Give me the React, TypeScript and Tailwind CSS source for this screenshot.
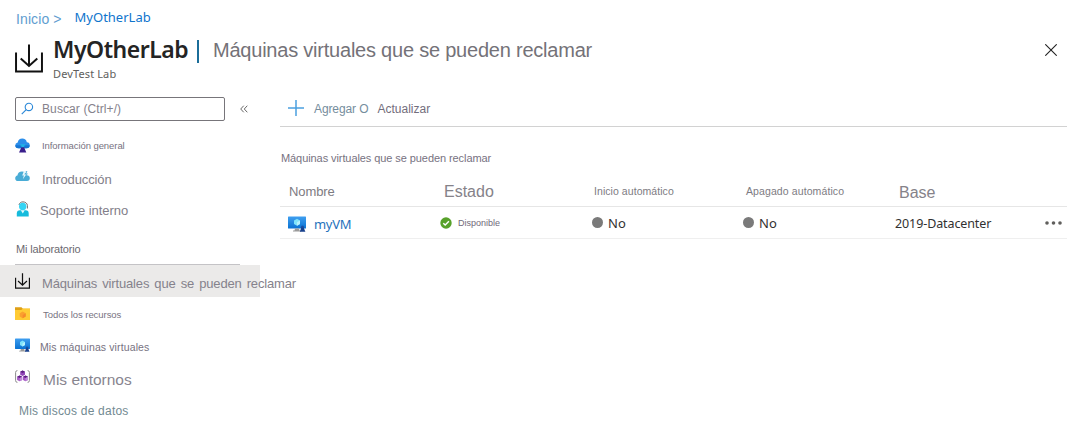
import React from "react";

const ARIAL = "font-['Liberation_Sans',Arial,sans-serif]";
const SEGOE = "font-['Noto_Sans','Segoe_UI',sans-serif]";

function Txt({ className, segoe, children }: { className: string; segoe?: boolean; children: React.ReactNode }) {
  return <span className={`${segoe ? SEGOE : ARIAL} block whitespace-nowrap ${className}`}>{children}</span>;
}

function DownloadIcon({ className, stroke }: { className: string; stroke: number }) {
  return (
    <svg viewBox="0 0 27 29" preserveAspectRatio="none" className={className} fill="none" stroke="#111" strokeWidth={stroke}>
      <path d="M1 8.500V27.500H26V8.500" />
      <path d="M13.500 0.500V21.500M5.500 14.500L13.500 22L21.500 14.500" />
    </svg>
  );
}

function VmIcon({ className }: { className: string }) {
  return (
    <svg viewBox="0 0 18 16" preserveAspectRatio="none" className={className}>
      <defs>
        <linearGradient id="vm" x1="0" y1="0" x2="0" y2="1">
          <stop offset="0" stopColor="#3f9ff0" />
          <stop offset="1" stopColor="#0a72d2" />
        </linearGradient>
      </defs>
      <rect x="0" y="0.500" width="18" height="12" rx="0.500" fill="url(#vm)" />
      <path d="M7 12.500h4l.5 2H13V15.500H5V14.500H6.500z" fill="#9a9a9a" />
      <path d="M9 2.800l3 1.700v3.600l-3 1.700-3-1.700V4.500z" fill="#7fe3fa" />
      <path d="M9 6.300l3-1.800v3.600l-3 1.700z" fill="#b4f1fd" />
      <circle cx="14.500" cy="11.200" r="1.600" fill="#1c4da1" />
      <path d="M11.800 15.800l1.500-4h2.400l1.700 4z" fill="#17408d" />
    </svg>
  );
}

function OverviewIcon() {
  return (
    <svg viewBox="0 0 15 15" className="size-[15px]">
      <path d="M3.300 10.300A3 3 0 0 1 .3 7.300a2.900 2.900 0 0 1 2.400-2.900A4.700 4.700 0 0 1 7.300.5a4.600 4.600 0 0 1 4.500 3.700 3.100 3.100 0 0 1 2.900 3.100 3 3 0 0 1-3 3z" fill="#2c8eea" />
      <path d="M3.300 10.300A3 3 0 0 1 .3 7.300h14.400a3 3 0 0 1-3 3z" fill="#1676d4" />
      <path d="M5.300 6.300h5v1.200H9.200v2.300H6.400V7.500H5.300z" fill="#20b4e6" />
      <path d="M6.400 9.300h2.700l2.200 5.200H4z" fill="#3a1f8c" />
    </svg>
  );
}

function QuickstartIcon() {
  return (
    <svg viewBox="0 0 15 12" className="h-[12px] w-[15px]">
      <path d="M3 11A2.800 2.800 0 0 1 .2 8.200c0-1.400.9-2.400 2.200-2.700A4.800 4.800 0 0 1 7 1.500a5 5 0 0 1 4.800 3.700A3 3 0 0 1 14.800 8a2.900 2.900 0 0 1-3 3z" fill="#49acd6" />
      <path d="M8.800 1.200L7.200 5.600h1.700L7.800 9.200l3.400-4.800H9.400L11 1.200z" fill="#e8f6fb" />
      <path d="M10.800.9l1.600.2-.9 2.400h1.600L11 6.200z" fill="#6cbde0" />
    </svg>
  );
}

function SupportIcon() {
  return (
    <svg viewBox="0 0 14 16" className="h-[16px] w-[14px]">
      <path d="M3 4C3.500 1.700 5 .9 7 .9s4.400 1.200 4.400 3.600V7.500" fill="none" stroke="#6e6e6e" strokeWidth="1" />
      <circle cx="6.700" cy="5.500" r="3.700" fill="#35d4f4" />
      <path d="M.8 15.500V12.500C.8 10.500 2 9.300 4 9.300h5.700c2 0 3 1.200 3 3.200v3z" fill="#16bbdc" />
      <path d="M4.800 9.300h3.900L6.800 12.500z" fill="#e2fafe" />
    </svg>
  );
}

function FolderIcon() {
  return (
    <svg viewBox="0 0 15 13" className="h-[13px] w-[15px]">
      <path d="M0 .3h6.500l1.500 1.500H15V13H0z" fill="#dfa016" />
      <path d="M0 3h6.300L8 1.600H15V13H0z" fill="#ffcb34" />
      <path d="M7.700 4.500l3 1.700v3.300l-3 1.700-3-1.700V6.200z" fill="#fba02e" />
      <path d="M7.700 7.900l3-1.700v3.300l-3 1.700z" fill="#f58a2c" />
    </svg>
  );
}

function EnvIcon() {
  return (
    <svg viewBox="0 0 15 13" className="h-[13px] w-[15px]">
      <path d="M2.400.6Q.6.600.6 2.400v8.200q0 1.800 1.800 1.800M12.600.6q1.800 0 1.800 1.800v8.200q0 1.800-1.800 1.800" fill="none" stroke="#8c8c8c" strokeWidth="1" />
      <path d="M7.600.4L10 1.700v3L7.600 6 5.200 4.700v-3z" fill="#9347b8" />
      <path d="M4.700 5.400l2.500 1.300v3.200l-2.500 1.400-2.600-1.400V6.700z" fill="#a456c4" />
      <path d="M10.500 5.400l2.500 1.300v3.200l-2.500 1.400L8 9.900V6.700z" fill="#a456c4" />
      <path d="M5.200 1.700L7.600.4 10 1.700 7.600 3zM2.100 6.700l2.600-1.300 2.500 1.300-2.500 1.400zM8 6.700l2.500-1.300L13 6.700l-2.500 1.400z" fill="#5b1f80" />
      <path d="M4.700 8.100v3.200l2.500-1.400V6.700zM10.500 8.100v3.200L13 9.900V6.700z" fill="#c08ad8" />
    </svg>
  );
}

function NavRow({ icon, iconClass, children, className = "h-8" }: { icon?: React.ReactNode; iconClass?: string; children: React.ReactNode; className?: string }) {
  return (
    <div className={`flex w-[260px] items-center pl-[15px] ${className}`}>
      {icon && <span className={`flex w-[15px] shrink-0 justify-center ${iconClass ?? ""}`}>{icon}</span>}
      {children}
    </div>
  );
}

const grid = "grid grid-cols-[160px_153px_152px_147px_1fr] border-b";

export default function App() {
  return (
    <div className="flex h-[425px] w-[1083px] flex-col overflow-hidden bg-white">
      <nav className="flex h-9 items-start pl-4">
        <Txt className="mt-[11px] text-[14px] leading-[16px] tracking-[0.1px] text-[#5f9dd0]">Inicio &gt;</Txt>
        <Txt segoe className="ml-[13px] mt-[8px] text-[13px] leading-[18px] text-[#0f74cc]">MyOtherLab</Txt>
      </nav>

      <header className="flex h-[54px] items-start pl-[15px]">
        <DownloadIcon className="mt-[8px] h-[29px] w-[28px]" stroke={1.9} />
        <div className="ml-[10px] w-[142px]">
          <Txt segoe className="h-[30px] text-[23px] font-semibold leading-[26px] tracking-[-0.48px] text-[#242424]">MyOtherLab</Txt>
          <Txt segoe className="text-[11px] leading-[16px] tracking-[0.12px] text-[#605e5c]">DevTest Lab</Txt>
        </div>
        <div className="ml-[2px] mt-[4px] h-[23px] w-[2px] bg-[#1b6d99]" />
        <Txt className="ml-[14px] mt-[3px] text-[20px] leading-[22px] tracking-[-0.22px] text-[#747278]">Máquinas virtuales que se pueden reclamar</Txt>
        <svg viewBox="0 0 12 12" className="ml-auto mr-[26px] mt-[8px] size-[12px]" stroke="#222" strokeWidth="1.100">
          <path d="M.3.3l11.400 11.400M11.700.3L.3 11.700" />
        </svg>
      </header>

      <div className="flex flex-1">
        <aside className="w-[280px] shrink-0">
          <div className="flex h-[39px] items-center pb-[2px] pl-[15px]">
            <div className="flex h-[24px] w-[210px] items-center rounded-[2px] border border-[#77757a] pl-[5px]">
              <svg viewBox="0 0 14 14" className="size-[13px]" fill="none" stroke="#2b88d8" strokeWidth="1.200">
                <circle cx="8.500" cy="5.300" r="4" />
                <path d="M5.600 8.200L.8 13" />
              </svg>
              <Txt className="ml-[8px] mt-px text-[12px] leading-[14px] tracking-[0.1px] text-[#85828c]">Buscar (Ctrl+/)</Txt>
            </div>
            <svg viewBox="0 0 9 8" className="ml-[15px] size-[8px]" fill="none" stroke="#555" strokeWidth="1">
              <path d="M4.200.3L.8 4l3.400 3.700M8.200.3L4.800 4l3.400 3.700" />
            </svg>
          </div>

          <NavRow icon={<OverviewIcon />}>
            <Txt className="ml-[12px] mt-[1px] text-[9.5px] leading-[12px] tracking-[-0.07px] text-[#77727f]">Información general</Txt>
          </NavRow>
          <NavRow icon={<QuickstartIcon />} iconClass="-mt-[2px]">
            <Txt className="ml-[12px] mt-[5px] text-[13px] leading-[16px] tracking-[-0.1px] text-[#827e89]">Introducción</Txt>
          </NavRow>
          <NavRow icon={<SupportIcon />} iconClass="-mt-[1px]">
            <Txt className="ml-[10px] mt-[3px] text-[13px] leading-[16px] tracking-[-0.05px] text-[#827e89]">Soporte interno</Txt>
          </NavRow>
          <div className="ml-[15px] flex h-[40px] w-[225px] items-center border-b border-[#c4c3c6]">
            <Txt className="ml-[1px] mt-[8px] text-[11px] leading-[14px] tracking-[-0.15px] text-[#6c6a70]">Mi laboratorio</Txt>
          </div>
          <NavRow className="h-8 bg-[#ebeae9]" icon={<DownloadIcon className="h-[16px] w-[15px]" stroke={2.2} />}>
            <Txt className="ml-[12px] mt-[5px] text-[13px] leading-[16px] tracking-[-0.15px] [word-spacing:1.600px] text-[#85828c]">Máquinas virtuales que se pueden reclamar</Txt>
          </NavRow>
          <NavRow icon={<FolderIcon />}>
            <Txt className="ml-[13px] mt-[3px] text-[9.5px] leading-[12px] tracking-[-0.05px] text-[#77727f]">Todos los recursos</Txt>
          </NavRow>
          <NavRow icon={<VmIcon className="h-[14px] w-[15px]" />}>
            <Txt className="ml-[10px] mt-[4px] text-[10.5px] leading-[13px] tracking-[0.12px] text-[#77727f]">Mis máquinas virtuales</Txt>
          </NavRow>
          <NavRow icon={<EnvIcon />} iconClass="-mt-px">
            <Txt className="ml-[13px] mt-[6px] text-[15.5px] leading-[18px] text-[#88858f]">Mis entornos</Txt>
          </NavRow>
          <NavRow>
            <Txt className="ml-[4px] mt-[4px] text-[12px] leading-[14px] tracking-[0.22px] text-[#738a92]">Mis discos de datos</Txt>
          </NavRow>
        </aside>

        <main className="w-[787px]">
          <div className="flex h-[37px] items-center border-b border-[#d2d2d2] pl-[8px]">
            <svg viewBox="0 0 16 16" className="size-[16px]" stroke="#4ba0df" strokeWidth="1.500">
              <path d="M8 0v16M0 8h16" />
            </svg>
            <Txt className="ml-[10px] mt-[2px] text-[12px] leading-[14px] tracking-[-0.1px] text-[#758d9d]">Agregar O</Txt>
            <Txt className="ml-[9px] mt-[2px] text-[12px] leading-[14px] text-[#736e7c]">Actualizar</Txt>
          </div>
          <div className="flex h-[49px] items-center">
            <Txt className="ml-[1px] mt-[13px] text-[11px] leading-[14px] tracking-[-0.08px] text-[#77727f]">Máquinas virtuales que se pueden reclamar</Txt>
          </div>
          <div className={`${grid} h-[31px] items-center border-[#e6e6e6]`}>
            <Txt className="ml-[9px] mt-px text-[13px] leading-[16px] tracking-[-0.1px] text-[#7d7b82]">Nombre</Txt>
            <Txt className="ml-[4px] mt-[2px] text-[16px] leading-[18px] text-[#858289]">Estado</Txt>
            <Txt className="ml-[1px] text-[10.5px] leading-[13px] tracking-[0.06px] text-[#7d7b82]">Inicio automático</Txt>
            <Txt className="ml-[1px] text-[10.5px] leading-[13px] tracking-[0.1px] text-[#7d7b82]">Apagado automático</Txt>
            <Txt className="ml-[7px] mt-[3px] text-[16px] leading-[18px] text-[#858289]">Base</Txt>
          </div>
          <div className={`${grid} h-[32px] border-[#efefef]`}>
            <div className="flex items-center pl-[8px]">
              <VmIcon className="mt-[2px] h-[16px] w-[18px]" />
              <Txt segoe className="ml-[8px] mt-[3px] text-[13px] leading-[18px] tracking-[-0.3px] text-[#1f72bc]">myVM</Txt>
            </div>
            <div className="flex items-center">
              <svg viewBox="0 0 12 12" className="size-[12px]">
                <circle cx="6" cy="6" r="5.700" fill="#57a12a" />
                <path d="M3.300 6.200l1.900 1.900 3.700-3.900" fill="none" stroke="#fff" strokeWidth="1.400" />
              </svg>
              <Txt className="ml-[6px] mt-[1px] text-[9px] leading-[12px] text-[#6f6979]">Disponible</Txt>
            </div>
            <div className="flex items-center">
              <span className="ml-[-1px] size-[11px] rounded-full bg-[#7a7a7a]" />
              <Txt segoe className="ml-[5px] text-[13px] leading-[18px] text-[#323130]">No</Txt>
            </div>
            <div className="flex items-center">
              <span className="ml-[-2px] size-[11px] rounded-full bg-[#7a7a7a]" />
              <Txt segoe className="ml-[5px] text-[13px] leading-[18px] text-[#323130]">No</Txt>
            </div>
            <div className="flex items-center">
              <Txt segoe className="ml-[3px] mt-[2px] text-[12.5px] leading-[18px] tracking-[-0.1px] text-[#323130]">2019-Datacenter</Txt>
              <svg viewBox="0 0 17 4" className="ml-auto mr-[5px] h-[4px] w-[17px]" fill="#605e5c">
                <circle cx="2" cy="2" r="1.800" />
                <circle cx="8.500" cy="2" r="1.800" />
                <circle cx="15" cy="2" r="1.800" />
              </svg>
            </div>
          </div>
        </main>
      </div>
    </div>
  );
}
